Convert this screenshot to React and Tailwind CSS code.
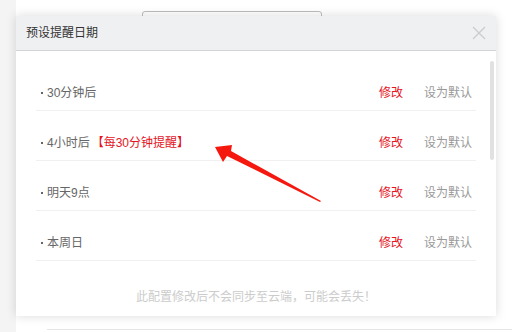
import React from "react";

const rows = [
  { label: "30分钟后" },
  { label: "4小时后", extra: "【每30分钟提醒】" },
  { label: "明天9点" },
  { label: "本周日" },
];

export default function App() {
  return (
    <div
      className="relative w-[512px] h-[332px] overflow-hidden bg-white flex"
      style={{ fontFamily: '"Liberation Sans", "Noto Sans CJK SC", sans-serif' }}
    >
      {/* background page */}
      <div className="w-4 h-full bg-[#f4f4f4] shrink-0" />
      <div className="flex-1 flex flex-col justify-between">
        <div className="ml-[126px] mt-[11px] w-[180px] h-[30px] border border-[#bdbdbd] rounded-[3px]" />
        <div className="ml-[31px] mb-[2px] h-px bg-[#e6e6e6]" />
      </div>

      {/* modal */}
      <div className="absolute left-4 top-4 w-[480px] h-[300px] bg-white shadow-[0_0_10px_rgba(0,0,0,0.15)] flex flex-col">
        <div className="h-[35px] bg-[#eff0f2] border-b border-[#d3d4d6] pl-[10px] pr-[10px] flex items-center justify-between shrink-0">
          <span className="text-[12px] text-[#333] leading-none">预设提醒日期</span>
          <svg width="14" height="14" viewBox="0 0 14 14">
            <path d="M1 1 L13 13 M13 1 L1 13" stroke="#cccccc" strokeWidth="1.3" fill="none" />
          </svg>
        </div>
        <div className="relative flex-1 pt-[10px] px-[20px] flex flex-col">
          <div className="absolute left-[474px] top-[10px] w-[4px] h-[99px] rounded-full bg-[#e1e1e1]" />
          {rows.map((r, i) => (
            <div
              key={i}
              className="h-[50px] border-b border-[#f0f0f0] pt-[25px] flex items-start justify-between text-[12px] leading-[14px]"
            >
              <div className="flex items-center text-[#666]">
                <span className="ml-[5px] mr-[4px] w-[2px] h-[2px] bg-[#666]" />
                <span>{r.label}</span>
                {r.extra && <span className="text-[#e5141e] ml-[2px]">{r.extra}</span>}
              </div>
              <div className="flex items-center mr-[4px]">
                <span className="text-[#e5141e]">修改</span>
                <span className="text-[#999] ml-[21px]">设为默认</span>
              </div>
            </div>
          ))}
          <div className="mt-[29px] text-center text-[12px] leading-[14px] text-[#cccccc]">
            此配置修改后不会同步至云端，可能会丢失！
          </div>
        </div>
      </div>

      {/* arrow annotation */}
      <svg className="absolute left-0 top-0" width="512" height="332" viewBox="0 0 512 332">
        <polygon
          points="215,147 232,145 231,151 321,201 320,202 227,156 223,162"
          fill="#f5180f"
        />
      </svg>
    </div>
  );
}
